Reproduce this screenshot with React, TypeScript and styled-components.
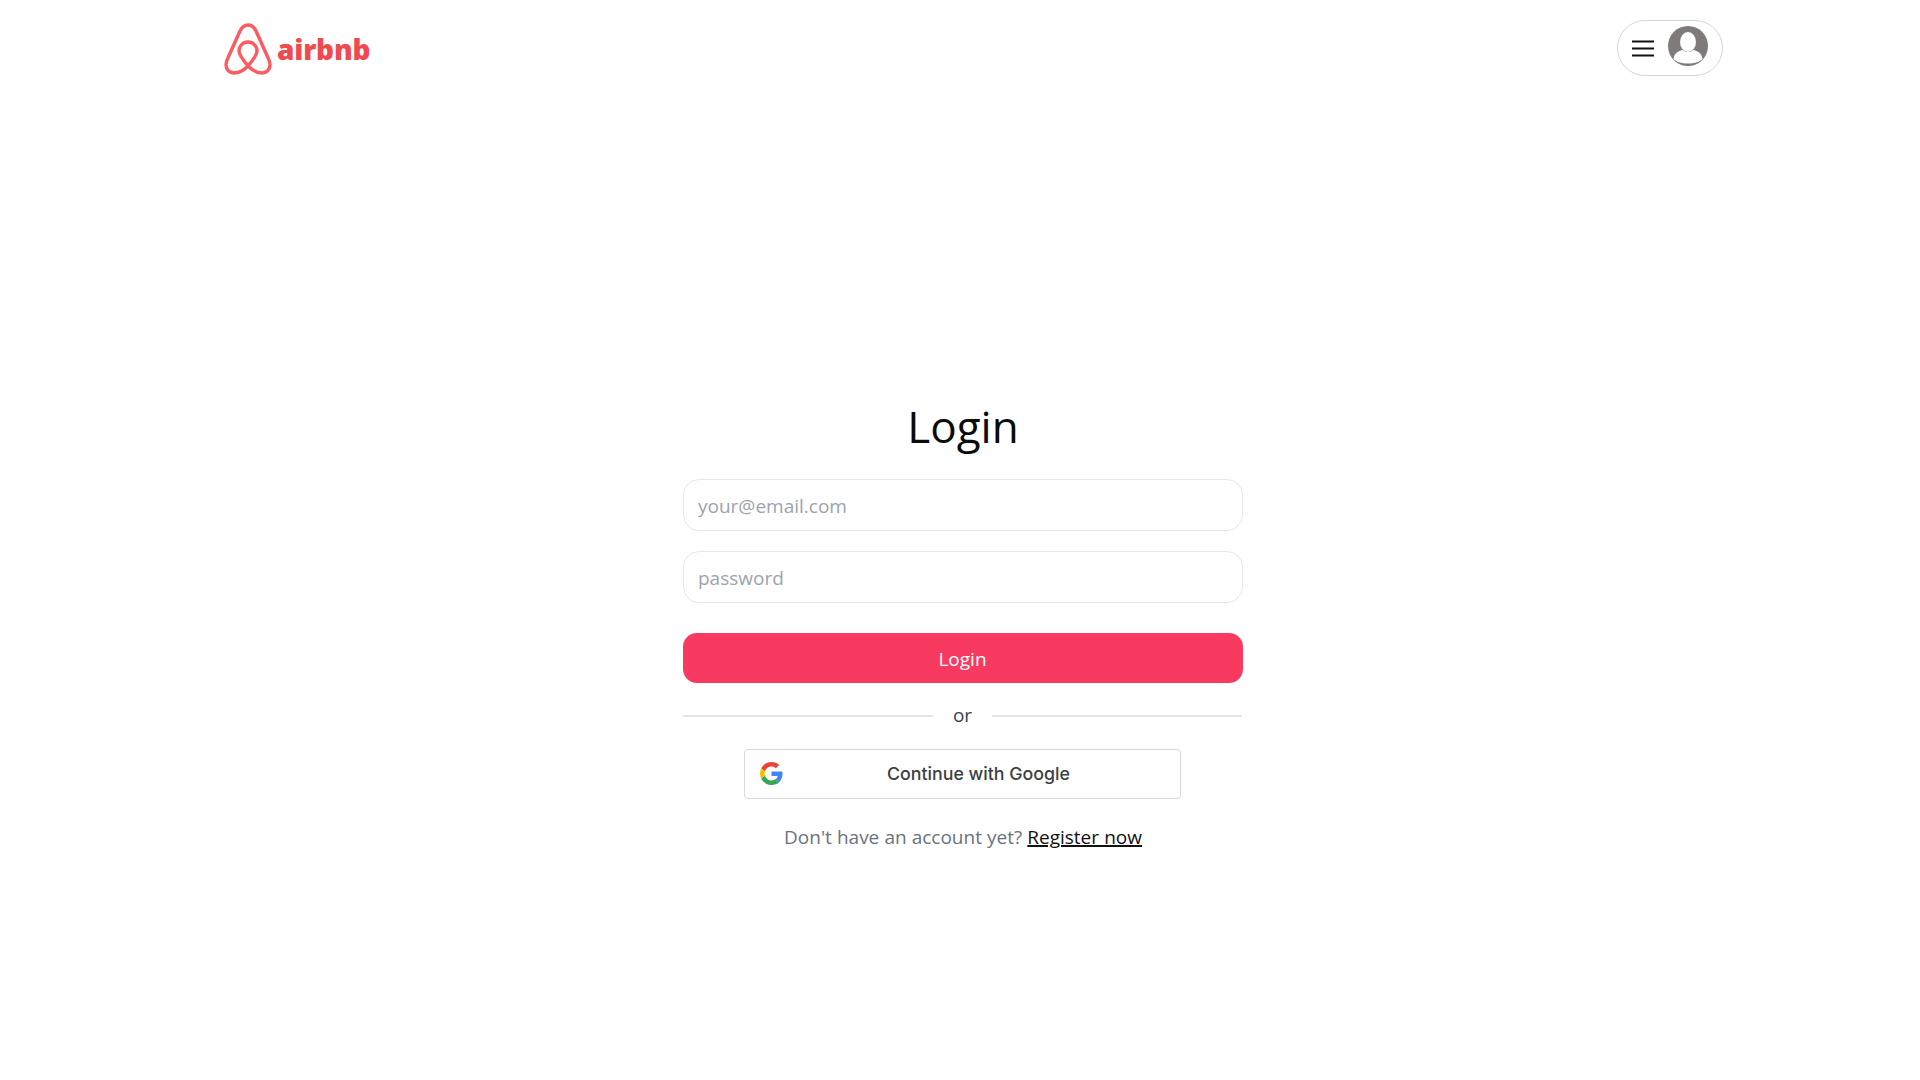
import React from "react";
import styled, { createGlobalStyle } from "styled-components";

const Global = createGlobalStyle`
  html, body { margin: 0; padding: 0; background: #fff; }
  body { font-family: "Open Sans", "Noto Sans", "Liberation Sans", sans-serif; }
  * { box-sizing: border-box; }
`;
const Page = styled.div`
  width: 1920px;
  height: 1080px;
  overflow: hidden;
  background: #fff;
`;
const Header = styled.header`
  display: flex;
  align-items: flex-start;
  justify-content: space-between;
  height: 96px;
  padding: 20px 197px 0 224px;
`;
const Brand = styled.a`
  display: flex;
  align-items: center;
  gap: 5px;
  height: 56px;
  padding-top: 1px;
  color: #f04a50;
  font-family: "Open Sans", "Liberation Sans", sans-serif;
  font-weight: 800;
  font-size: 28px;
  letter-spacing: -0.2px;
  text-decoration: none;
`;
const MenuPill = styled.button`
  display: flex;
  align-items: center;
  gap: 13px;
  width: 106px;
  height: 56px;
  padding: 0 13px;
  background: #fff;
  border: 1px solid #d1d5db;
  border-radius: 28px;
`;
const Main = styled.main`
  display: flex;
  flex-direction: column;
  align-items: center;
  padding: 301px 0 0 6px;
`;
const Title = styled.h1`
  margin: 0 0 20px;
  height: 62px;
  font-size: 44px;
  line-height: 58px;
  font-weight: 400;
  color: #0b0b0b;
`;
const Form = styled.form`
  display: flex;
  flex-direction: column;
  width: 560px;
`;
const Field = styled.input`
  width: 100%;
  height: 52px;
  margin-bottom: 20px;
  padding: 2px 14px 0;
  border: 1px solid #e5e7eb;
  border-radius: 16px;
  outline: none;
  font-family: inherit;
  font-size: 19px;
  color: #111;
  &::placeholder { color: #9ca3af; opacity: 1; }
`;
const Submit = styled.button`
  height: 50px;
  margin-top: 10px;
  padding: 2px 1px 0 0;
  border: none;
  border-radius: 14px;
  background: #f83a60;
  color: #fff;
  font-family: inherit;
  font-size: 19px;
  font-weight: 500;
`;
const Divider = styled.div`
  display: flex;
  align-items: center;
  gap: 20px;
  width: 559px;
  height: 66px;
  margin-right: 1px;
  color: #374151;
  font-size: 19px;
  &::before, &::after {
    content: "";
    flex: 1;
    height: 2px;
    background: #e5e5e5;
  }
`;
const DividerLabel = styled.span`
  margin-bottom: 3px;
`;
const GoogleButton = styled.button`
  position: relative;
  display: flex;
  align-items: center;
  justify-content: center;
  width: 437px;
  height: 50px;
  margin-right: 1px;
  padding: 0 0 2px 32px;
  background: #fff;
  border: 1px solid #d9d9d9;
  border-radius: 4px;
  color: #3c4043;
  font-family: Inter, Roboto, "Liberation Sans", sans-serif;
  font-size: 17.8px;
  font-weight: 500;
`;
const GoogleMark = styled.svg`
  position: absolute;
  left: 15px;
  top: 12px;
  width: 23px;
  height: 23px;
`;
const Prompt = styled.p`
  margin: 24px 0 0;
  color: #6b7280;
  font-size: 19px;
  line-height: 28px;
  word-spacing: 0.15px;
`;
const RegisterLink = styled.a`
  color: #111;
  text-decoration: underline;
  text-decoration-thickness: 2px;
`;

const AirbnbLogo = () => (
  <svg width="48" height="54" viewBox="0 0 48 54" fill="none" stroke="#ff5a5f" strokeWidth="3.4" strokeLinejoin="round">
    <path d="M24 44C19 38 15 33 15 29a9 9 0 0 1 18 0C33 33 29 38 24 44c-5 5-9.500 7-14 7C5.500 51 2 47.500 2 43c0-2.500.8-4.800 2-7.200L16 9C18 5 20.500 3 24 3s6 2 8 6l12 26.800c1.200 2.400 2 4.700 2 7.200 0 4.500-3.500 8-8 8-4.500 0-9-2-14-7z" />
  </svg>
);

const HamburgerIcon = () => (
  <svg width="24" height="24" viewBox="0 0 24 24" stroke="#111" strokeWidth="2" style={{ flex: "none" }}>
    <path d="M1 5.500h22M1 12.500h22M1 19.500h22" />
  </svg>
);

const AvatarIcon = () => (
  <svg width="40" height="40" viewBox="0 0 40 40" style={{ flex: "none", marginTop: -4 }}>
    <circle cx="20" cy="20" r="20" fill="#7f7b7b" />
    <ellipse cx="20" cy="16" rx="8" ry="10" fill="#fff" />
    <path d="M5.500 33c.5-5 4-8 9-9 3 2.500 8 2.500 11 0 5 1 8.500 4 9 9-3.500 3.500-9 4.500-14.500 4.500S9 36.500 5.500 33z" fill="#fff" />
  </svg>
);

const GoogleIcon = () => (
  <GoogleMark viewBox="0 0 48 48">
    <path fill="#EA4335" d="M24 9.500c3.540 0 6.710 1.220 9.210 3.600l6.850-6.850C35.900 2.380 30.470 0 24 0 14.620 0 6.510 5.380 2.560 13.220l7.980 6.190C12.430 13.720 17.740 9.500 24 9.500z" />
    <path fill="#4285F4" d="M46.980 24.550c0-1.570-.15-3.090-.38-4.550H24v9.020h12.940c-.58 2.960-2.260 5.480-4.780 7.180l7.730 6c4.510-4.180 7.090-10.360 7.090-17.650z" />
    <path fill="#FBBC05" d="M10.530 28.590c-.48-1.450-.76-2.990-.76-4.590s.27-3.140.76-4.590l-7.980-6.190C.92 16.460 0 20.120 0 24c0 3.880.92 7.540 2.560 10.780l7.970-6.190z" />
    <path fill="#34A853" d="M24 48c6.480 0 11.930-2.130 15.890-5.810l-7.730-6c-2.150 1.450-4.920 2.300-8.160 2.300-6.260 0-11.570-4.220-13.470-9.910l-7.980 6.190C6.510 42.620 14.620 48 24 48z" />
  </GoogleMark>
);

export default function App() {
  return (
    <Page>
      <Global />
      <Header>
        <Brand href="#">
          <AirbnbLogo />
          airbnb
        </Brand>
        <MenuPill type="button" aria-label="Menu">
          <HamburgerIcon />
          <AvatarIcon />
        </MenuPill>
      </Header>
      <Main>
        <Title>Login</Title>
        <Form>
          <Field type="email" placeholder="your@email.com" />
          <Field type="password" placeholder="password" />
          <Submit type="button">Login</Submit>
        </Form>
        <Divider>
          <DividerLabel>or</DividerLabel>
        </Divider>
        <GoogleButton type="button">
          <GoogleIcon />
          Continue with Google
        </GoogleButton>
        <Prompt>
          Don't have an account yet? <RegisterLink href="#">Register now</RegisterLink>
        </Prompt>
      </Main>
    </Page>
  );
}
